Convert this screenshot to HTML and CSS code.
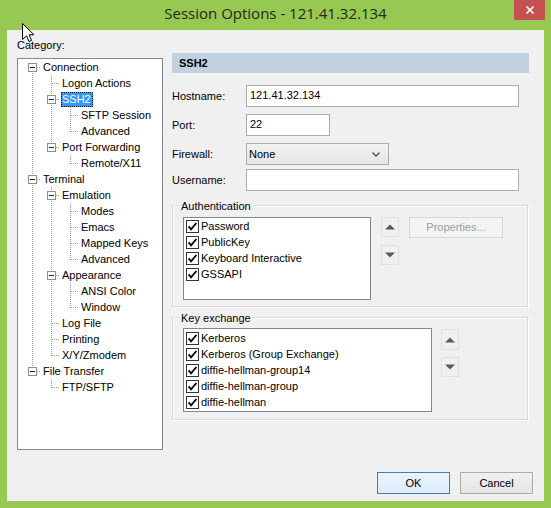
FILE: index.html
```html
<!DOCTYPE html>
<html>
<head>
<meta charset="utf-8">
<title>Session Options</title>
<link rel="stylesheet" href="styles.css">
</head>
<body>
<svg class="sprite" xmlns="http://www.w3.org/2000/svg">
  <symbol id="pipe" viewBox="0 0 19 16"><line x1="10.5" y1="0" x2="10.5" y2="16" stroke="#a0a0a0" stroke-dasharray="1 1"/></symbol>
  <symbol id="tee" viewBox="0 0 19 16"><line x1="10.5" y1="0" x2="10.5" y2="16" stroke="#a0a0a0" stroke-dasharray="1 1"/><line x1="11" y1="8.5" x2="19" y2="8.5" stroke="#a0a0a0" stroke-dasharray="1 1"/></symbol>
  <symbol id="elbow" viewBox="0 0 19 16"><line x1="10.5" y1="0" x2="10.5" y2="9" stroke="#a0a0a0" stroke-dasharray="1 1"/><line x1="11" y1="8.5" x2="19" y2="8.5" stroke="#a0a0a0" stroke-dasharray="1 1"/></symbol>
  <symbol id="first-box" viewBox="0 0 19 16"><line x1="10.5" y1="8" x2="10.5" y2="16" stroke="#a0a0a0" stroke-dasharray="1 1"/><line x1="11" y1="8.5" x2="19" y2="8.5" stroke="#a0a0a0" stroke-dasharray="1 1"/><rect x="6.5" y="4.5" width="8" height="8" fill="#fff" stroke="#8f8f8f"/><line x1="8" y1="8.5" x2="13" y2="8.5" stroke="#222"/></symbol>
  <symbol id="tee-box" viewBox="0 0 19 16"><line x1="10.5" y1="0" x2="10.5" y2="16" stroke="#a0a0a0" stroke-dasharray="1 1"/><line x1="11" y1="8.5" x2="19" y2="8.5" stroke="#a0a0a0" stroke-dasharray="1 1"/><rect x="6.5" y="4.5" width="8" height="8" fill="#fff" stroke="#8f8f8f"/><line x1="8" y1="8.5" x2="13" y2="8.5" stroke="#222"/></symbol>
  <symbol id="elbow-box" viewBox="0 0 19 16"><line x1="10.5" y1="0" x2="10.5" y2="9" stroke="#a0a0a0" stroke-dasharray="1 1"/><line x1="11" y1="8.5" x2="19" y2="8.5" stroke="#a0a0a0" stroke-dasharray="1 1"/><rect x="6.5" y="4.5" width="8" height="8" fill="#fff" stroke="#8f8f8f"/><line x1="8" y1="8.5" x2="13" y2="8.5" stroke="#222"/></symbol>
  <symbol id="chk" viewBox="0 0 13 13"><rect x="0.5" y="0.5" width="12" height="12" fill="#fff" stroke="#333"/><path d="M2.6 6.4 L5.1 9.3 L10.4 3" fill="none" stroke="#000" stroke-width="1.9"/></symbol>
  <symbol id="up" viewBox="0 0 10 6"><path d="M0 5.5 L5 0.5 L10 5.5 Z" fill="#5a5a5a"/></symbol>
  <symbol id="down" viewBox="0 0 10 6"><path d="M0 0.5 L5 5.5 L10 0.5 Z" fill="#5a5a5a"/></symbol>
</svg>

<div class="window">
  <div class="titlebar">
    <div class="title">Session Options - 121.41.32.134</div>
    <div class="close">
      <svg width="10" height="10" viewBox="0 0 10 10"><path d="M1.5 1.5 L8.5 8.5 M8.5 1.5 L1.5 8.5" stroke="#fff" stroke-width="1.7" fill="none"/></svg>
    </div>
  </div>

  <div class="client">
    <div class="main">
      <div class="left">
        <div class="caption">Category:</div>
        <div class="tree">
          <div class="row"><svg class="c"><use href="#first-box"/></svg><span class="t">Connection</span></div>
          <div class="row"><svg class="c"><use href="#pipe"/></svg><svg class="c"><use href="#tee"/></svg><span class="t">Logon Actions</span></div>
          <div class="row"><svg class="c"><use href="#pipe"/></svg><svg class="c"><use href="#tee-box"/></svg><span class="t sel">SSH2</span></div>
          <div class="row"><svg class="c"><use href="#pipe"/></svg><svg class="c"><use href="#pipe"/></svg><svg class="c"><use href="#tee"/></svg><span class="t">SFTP Session</span></div>
          <div class="row"><svg class="c"><use href="#pipe"/></svg><svg class="c"><use href="#pipe"/></svg><svg class="c"><use href="#elbow"/></svg><span class="t">Advanced</span></div>
          <div class="row"><svg class="c"><use href="#pipe"/></svg><svg class="c"><use href="#elbow-box"/></svg><span class="t">Port Forwarding</span></div>
          <div class="row"><svg class="c"><use href="#pipe"/></svg><svg class="c"></svg><svg class="c"><use href="#elbow"/></svg><span class="t">Remote/X11</span></div>
          <div class="row"><svg class="c"><use href="#tee-box"/></svg><span class="t">Terminal</span></div>
          <div class="row"><svg class="c"><use href="#pipe"/></svg><svg class="c"><use href="#tee-box"/></svg><span class="t">Emulation</span></div>
          <div class="row"><svg class="c"><use href="#pipe"/></svg><svg class="c"><use href="#pipe"/></svg><svg class="c"><use href="#tee"/></svg><span class="t">Modes</span></div>
          <div class="row"><svg class="c"><use href="#pipe"/></svg><svg class="c"><use href="#pipe"/></svg><svg class="c"><use href="#tee"/></svg><span class="t">Emacs</span></div>
          <div class="row"><svg class="c"><use href="#pipe"/></svg><svg class="c"><use href="#pipe"/></svg><svg class="c"><use href="#tee"/></svg><span class="t">Mapped Keys</span></div>
          <div class="row"><svg class="c"><use href="#pipe"/></svg><svg class="c"><use href="#pipe"/></svg><svg class="c"><use href="#elbow"/></svg><span class="t">Advanced</span></div>
          <div class="row"><svg class="c"><use href="#pipe"/></svg><svg class="c"><use href="#tee-box"/></svg><span class="t">Appearance</span></div>
          <div class="row"><svg class="c"><use href="#pipe"/></svg><svg class="c"><use href="#pipe"/></svg><svg class="c"><use href="#tee"/></svg><span class="t">ANSI Color</span></div>
          <div class="row"><svg class="c"><use href="#pipe"/></svg><svg class="c"><use href="#pipe"/></svg><svg class="c"><use href="#elbow"/></svg><span class="t">Window</span></div>
          <div class="row"><svg class="c"><use href="#pipe"/></svg><svg class="c"><use href="#tee"/></svg><span class="t">Log File</span></div>
          <div class="row"><svg class="c"><use href="#pipe"/></svg><svg class="c"><use href="#tee"/></svg><span class="t">Printing</span></div>
          <div class="row"><svg class="c"><use href="#pipe"/></svg><svg class="c"><use href="#elbow"/></svg><span class="t">X/Y/Zmodem</span></div>
          <div class="row"><svg class="c"><use href="#elbow-box"/></svg><span class="t">File Transfer</span></div>
          <div class="row"><svg class="c"></svg><svg class="c"><use href="#elbow"/></svg><span class="t">FTP/SFTP</span></div>
        </div>
      </div>

      <div class="right">
        <div class="band">SSH2</div>

        <div class="frow r1"><span class="lbl">Hostname:</span><div class="edit wide">121.41.32.134</div></div>
        <div class="frow r2"><span class="lbl">Port:</span><div class="edit port">22</div></div>
        <div class="frow r3"><span class="lbl">Firewall:</span>
          <div class="combo"><span>None</span>
            <svg class="chev" width="8" height="5" viewBox="0 0 8 5"><path d="M0.5 0.5 L4 4 L7.5 0.5" fill="none" stroke="#555" stroke-width="1.4"/></svg>
          </div>
        </div>
        <div class="frow r4"><span class="lbl">Username:</span><div class="edit wide"></div></div>

        <div class="group auth">
          <span class="legend">Authentication</span>
          <div class="gbody">
            <div class="list auth-list">
              <div class="item"><svg class="cb"><use href="#chk"/></svg><span>Password</span></div>
              <div class="item"><svg class="cb"><use href="#chk"/></svg><span>PublicKey</span></div>
              <div class="item"><svg class="cb"><use href="#chk"/></svg><span>Keyboard Interactive</span></div>
              <div class="item"><svg class="cb"><use href="#chk"/></svg><span>GSSAPI</span></div>
            </div>
            <div class="arrows">
              <div class="arr"><svg class="tri"><use href="#up"/></svg></div>
              <div class="arr"><svg class="tri"><use href="#down"/></svg></div>
            </div>
            <div class="props">Properties...</div>
          </div>
        </div>

        <div class="group kex">
          <span class="legend">Key exchange</span>
          <div class="gbody">
            <div class="list kex-list">
              <div class="item"><svg class="cb"><use href="#chk"/></svg><span>Kerberos</span></div>
              <div class="item"><svg class="cb"><use href="#chk"/></svg><span>Kerberos (Group Exchange)</span></div>
              <div class="item"><svg class="cb"><use href="#chk"/></svg><span>diffie-hellman-group14</span></div>
              <div class="item"><svg class="cb"><use href="#chk"/></svg><span>diffie-hellman-group</span></div>
              <div class="item"><svg class="cb"><use href="#chk"/></svg><span>diffie-hellman</span></div>
            </div>
            <div class="arrows kex-arrows">
              <div class="arr"><svg class="tri"><use href="#up"/></svg></div>
              <div class="arr"><svg class="tri"><use href="#down"/></svg></div>
            </div>
          </div>
        </div>
      </div>
    </div>

    <div class="footer">
      <div class="btn ok">OK</div>
      <div class="btn">Cancel</div>
    </div>
  </div>

  <svg class="cursor" width="14" height="21" viewBox="0 0 14 21"><path d="M0.5 0.5 L0.5 16.5 L4.5 12.8 L7 18.5 L9.5 17.4 L7.1 11.8 L12 11.8 Z" fill="#fff" stroke="#000" stroke-linejoin="round"/></svg>
</div>
</body>
</html>
```

FILE: styles.css
```css
* { box-sizing: border-box; }
html, body { margin: 0; padding: 0; }
body {
  width: 551px;
  height: 508px;
  overflow: hidden;
  background: #97c852;
  font-family: "Liberation Sans", Arial, sans-serif;
  font-size: 11px;
  color: #000;
}
.sprite { position: absolute; width: 0; height: 0; overflow: hidden; }

.window {
  position: relative;
  width: 551px;
  height: 508px;
  display: flex;
  flex-direction: column;
}

/* title bar */
.titlebar {
  height: 30px;
  flex: none;
  display: grid;
  grid-template-columns: 1fr auto 1fr;
}
.title {
  grid-column: 2;
  margin-top: 3px;
  font-family: "Open Sans", "Noto Sans", sans-serif;
  font-size: 15px;
  line-height: 20px;
  color: #1f2a18;
  white-space: nowrap;
}
.close {
  grid-column: 3;
  justify-self: end;
  margin-right: 6px;
  width: 31px;
  height: 20px;
  background: #c75050;
  display: flex;
  align-items: center;
  justify-content: center;
}

/* client area */
.client {
  flex: 1;
  margin: 0 7px 7px 7px;
  background: #f0f0f0;
  display: flex;
  flex-direction: column;
}
.main { flex: 1; display: flex; }

.left {
  width: 156px;
  padding-left: 10px;
  display: flex;
  flex-direction: column;
}
.caption { margin-top: 8px; height: 14px; line-height: 14px; }
.tree {
  margin-top: 6px;
  height: 392px;
  background: #fff;
  border: 1px solid #828790;
}
.row {
  height: 16px;
  display: flex;
  align-items: center;
  padding-left: 4px;
}
.c { width: 19px; height: 16px; flex: none; display: block; }
.t {
  margin-left: 1px;
  padding: 0 2px 0 1px;
  line-height: 15px;
  height: 15px;
  margin-top: 1px;
  white-space: nowrap;
}
.t.sel {
  background: #3399ff;
  color: #fff;
  outline: 1px dotted #1a1a1a;
  outline-offset: -1px;
}

/* right panel */
.right {
  margin-left: 9px;
  width: 357px;
  padding-top: 23px;
  display: flex;
  flex-direction: column;
}
.band {
  height: 20px;
  line-height: 20px;
  background: #c1d1df;
  font-weight: bold;
  padding-left: 7px;
}
.frow { display: flex; align-items: center; }
.r1 { margin-top: 12px; }
.r2 { margin-top: 7px; }
.r3 { margin-top: 7px; }
.r4 { margin-top: 4px; }
.lbl { width: 74px; flex: none; }
.edit {
  height: 22px;
  border: 1px solid #abadb3;
  background: #fff;
  padding-left: 3px;
  line-height: 19px;
}
.wide { width: 273px; }
.port { width: 84px; }
.combo {
  width: 143px;
  height: 22px;
  border: 1px solid #acacac;
  background: linear-gradient(#f2f2f2, #e5e5e5);
  padding: 0 8px 0 2px;
  display: flex;
  align-items: center;
  justify-content: space-between;
}
.chev { display: block; }

/* group boxes */
.group {
  width: 356px;
  border: 1px solid #d9d9d9;
  box-shadow: inset 1px 1px 0 #fff, 1px 1px 0 #fff;
  padding: 0 0 6px 10px;
}
.auth { margin-top: 14px; }
.kex { margin-top: 10px; padding-bottom: 7px; }
.legend {
  display: block;
  width: max-content;
  margin: -7px 0 0 -4px;
  padding: 0 2px;
  line-height: 14px;
  height: 14px;
  background: #f0f0f0;
}
.gbody { display: flex; align-items: flex-start; margin-top: 4px; }
.kex .gbody { margin-top: 3px; }

.list {
  background: #fff;
  border: 1px solid #828790;
  flex: none;
}
.auth-list { width: 188px; height: 83px; }
.kex-list { width: 249px; height: 84px; padding-top: 1px; }
.item {
  height: 16px;
  display: flex;
  align-items: center;
  padding-left: 2px;
  white-space: nowrap;
}
.cb { width: 13px; height: 13px; flex: none; margin-right: 2px; display: block; }

.arrows {
  margin-left: 10px;
  display: flex;
  flex-direction: column;
  gap: 8px;
}
.arr {
  width: 18px;
  height: 20px;
  border: 1px solid #e0e0e0;
  background: #f0f0f0;
  display: flex;
  align-items: center;
  justify-content: center;
}
.tri { width: 10px; height: 6px; display: block; }
.kex-arrows { margin-left: 9px; margin-top: 1px; gap: 7px; }
.kex-arrows .arr:first-child { height: 21px; }

.props {
  margin-left: 10px;
  width: 94px;
  height: 21px;
  border: 1px solid #d6d6d6;
  background: #f3f3f3;
  color: #9d9d9d;
  text-align: center;
  line-height: 19px;
}

/* footer */
.footer {
  display: flex;
  justify-content: flex-end;
  gap: 10px;
  padding: 0 11px 7px 0;
}
.btn {
  width: 73px;
  height: 22px;
  border: 1px solid #acacac;
  background: linear-gradient(#f0f0f0, #e5e5e5);
  text-align: center;
  line-height: 20px;
}
.btn.ok {
  border-color: #3c7fb1;
  background: linear-gradient(#ecf4fc, #dcecfc);
}

.cursor { position: absolute; left: 22px; top: 23px; }
```
